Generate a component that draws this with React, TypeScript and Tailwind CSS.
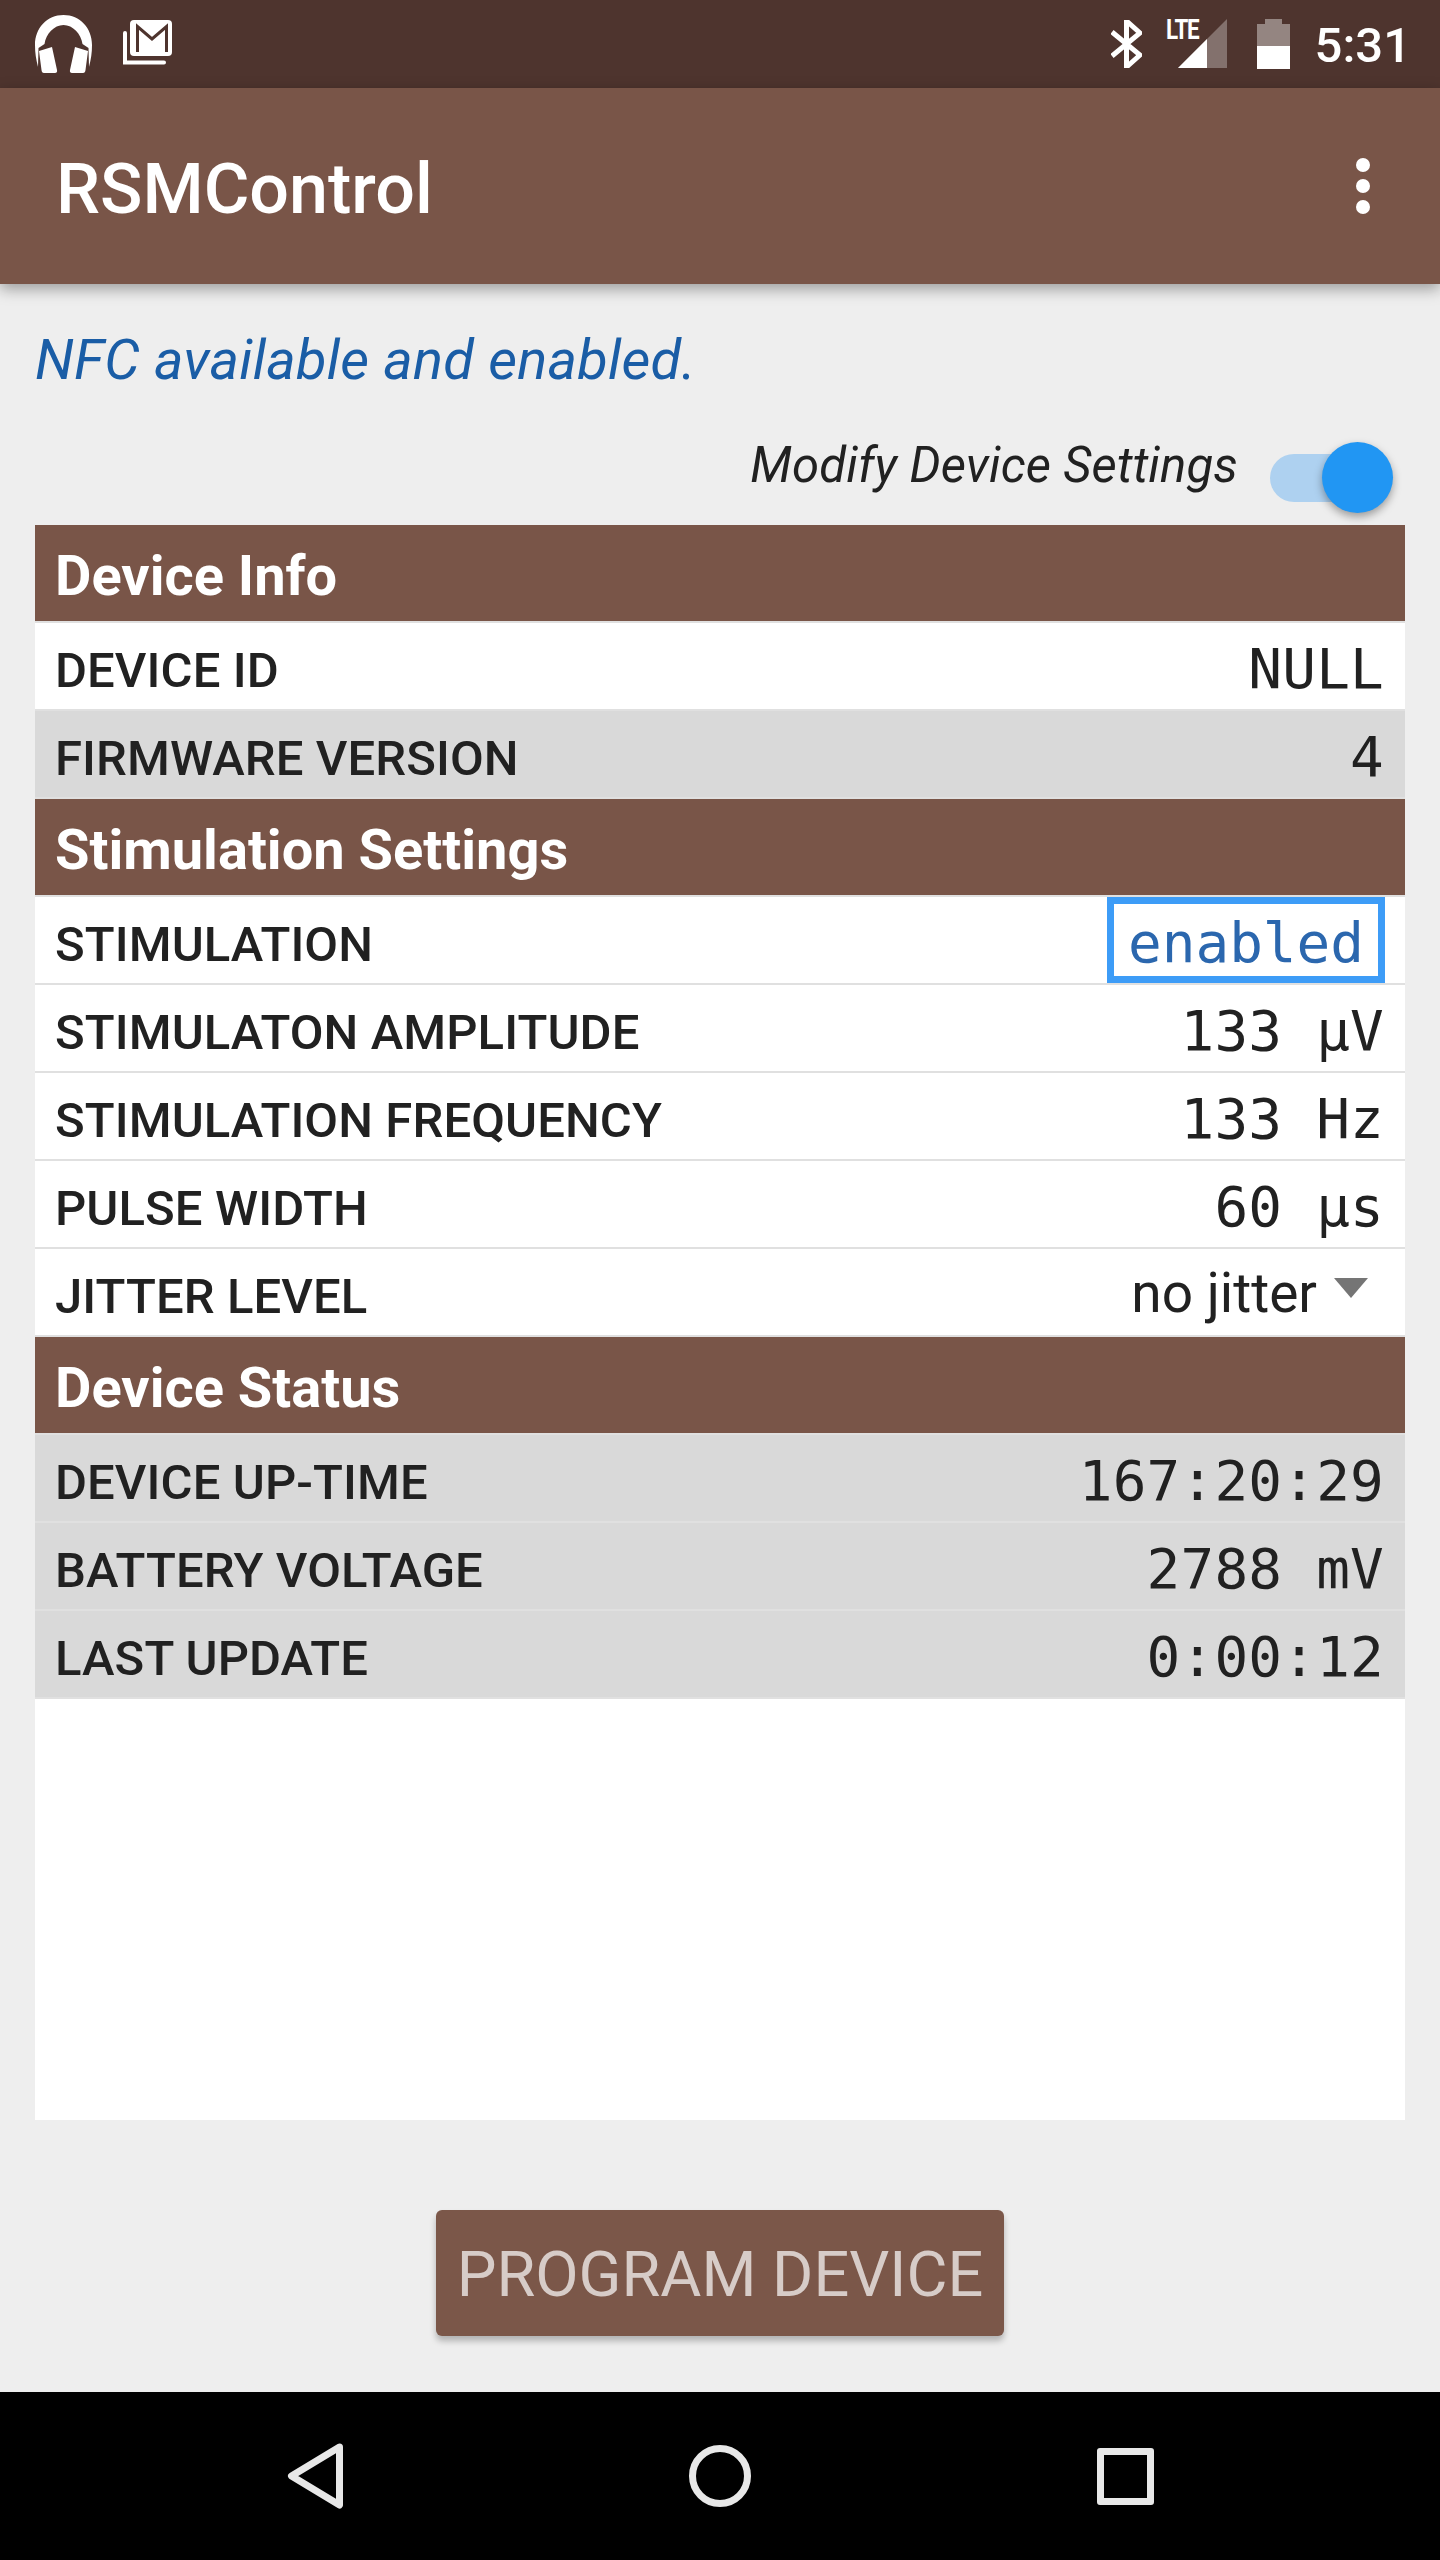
const headerClass = "flex h-[96px] mb-[2px] items-center bg-[#795548] px-[20px] pt-[5px] text-[56px] font-bold leading-none text-white";

function SectionHeader({ title }: { title: string }) {
  return <div className={headerClass}>{title}</div>;
}

function Row({ label, grey, children }: { label: string; grey?: boolean; children: React.ReactNode }) {
  return (
    <div className={`flex h-[86px] mb-[2px] items-center justify-between pl-[20px] pr-[20px] ${grey ? "bg-[#d9d9d9]" : "bg-white"}`}>
      <span className="mt-[9px] text-[49px] font-medium leading-none tracking-[0.1px] text-[#212121]">{label}</span>
      {children}
    </div>
  );
}

function Mono({ children }: { children: React.ReactNode }) {
  return <span className="mr-[1px] mt-[5px] font-['DejaVu_Sans_Mono',monospace] text-[56px] leading-none tracking-[0.2px] text-[#212121]">{children}</span>;
}

function StatusBar() {
  return (
    <div className="flex h-[88px] items-center justify-between bg-[#4e342e] pl-[35px] pr-[35px]">
      <div className="flex items-center gap-[30px]">
        <svg viewBox="0 0 57 58" className="h-[58px] w-[57px]" fill="#fff">
          <path d="M0 30C0 13 12 0 28.500 0S57 13 57 30c0 8-1 14-3 22l-.500-19-6-4C46 19 38 10 28.500 10S11 19 9.500 29l-6 4L3 52C1 44 0 38 0 30z" />
          <path d="M4 36l13-4 5 23c.5 2-.5 3-2 3H9c-1.500 0-2.300-1-2.500-3z" />
          <path d="M53 36l-13-4-5 23c-.5 2 .5 3 2 3h11c1.500 0 2.300-1 2.500-3z" />
        </svg>
        <svg viewBox="0 0 51 45" className="mt-[-3px] h-[45px] w-[51px]">
          <path d="M3 13v29.500h39" fill="none" stroke="#fff" strokeWidth="4" strokeLinecap="round" />
          <rect x="8" y="0" width="42" height="36" rx="4" fill="#fff" />
          <path d="M15.500 32V6.500L30 19 44.500 6.500V32" fill="none" stroke="#4e342e" strokeWidth="3" />
        </svg>
      </div>
      <div className="mr-[-6px] flex items-center">
        <svg viewBox="0 0 31 48" className="h-[48px] w-[31px]">
          <path d="M1 12l28 23-13.500 12V1L29 13 1 36" fill="none" stroke="#fff" strokeWidth="5" />
        </svg>
        <div className="relative ml-[36px] h-[50px] w-[49px]">
          <svg viewBox="0 0 49 49" className="absolute left-0 top-0 h-[49px] w-[49px]">
            <path d="M49 0v49H0z" fill="#fff" opacity="0.3" />
            <path d="M29 20v29H0z" fill="#fff" />
          </svg>
          <span className="absolute left-[-12px] top-[-3px] origin-left scale-x-[0.8] font-['Roboto',sans-serif] text-[28px] font-bold leading-[28px] tracking-[-1.500px] text-white">LTE</span>
        </div>
        <svg viewBox="0 0 33 50" className="ml-[30px] h-[50px] w-[33px]">
          <path d="M0 5h8V0h17v5h8v45H0z" fill="#fff" opacity="0.4" />
          <path d="M0 27h33v23H0z" fill="#fff" />
        </svg>
        <span className="ml-[25px] mt-[2px] text-[49px] font-medium leading-none text-white">5:31</span>
      </div>
    </div>
  );
}

function Toolbar() {
  return (
    <div className="relative z-10 flex h-[196px] items-center justify-between bg-[#795548] pl-[56px] pr-[70px] shadow-[0_5px_14px_rgba(0,0,0,0.35)]">
      <span className="mt-[6px] text-[70px] font-medium leading-none text-white">RSMControl</span>
      <div className="flex flex-col gap-[7px]">
        <div className="h-[14px] w-[14px] rounded-full bg-white" />
        <div className="h-[14px] w-[14px] rounded-full bg-white" />
        <div className="h-[14px] w-[14px] rounded-full bg-white" />
      </div>
    </div>
  );
}

function NavBar() {
  return (
    <div className="flex h-[168px] items-center bg-black pl-[287px] pr-[286px]">
      <div className="flex w-full items-center justify-between">
        <svg viewBox="0 0 56 66" className="h-[66px] w-[56px]">
          <path d="M52.500 4L4.500 33l48 29z" fill="none" stroke="#e8e8e8" strokeWidth="7" strokeLinejoin="round" />
        </svg>
        <div className="h-[62px] w-[62px] rounded-full border-[7px] border-[#e8e8e8]" />
        <div className="h-[57px] w-[57px] rounded-[3px] border-[7px] border-[#e8e8e8]" />
      </div>
    </div>
  );
}

export default function App() {
  return (
    <div className="flex h-[2560px] w-[1440px] flex-col overflow-hidden bg-[#eeeeee] font-['Roboto',sans-serif]">
      <StatusBar />
      <Toolbar />

      <div className="flex flex-1 flex-col px-[35px]">
        <div className="flex h-[146px] items-end pb-[42px]">
          <span className="text-[56px] italic leading-none tracking-[0.25px] text-[#1a5da6]">NFC available and enabled.</span>
        </div>

        <div className="flex h-[95px] items-start justify-end pr-[12px]">
          <span className="mt-[11px] text-[49px] italic leading-none tracking-[0.15px] text-[#212121]">Modify Device Settings</span>
          <div className="relative ml-[32px] mt-[12px] h-[71px] w-[123px]">
            <div className="absolute left-0 top-[12px] h-[48px] w-[98px] rounded-full bg-[#aed1f0]" />
            <div className="absolute right-0 top-0 h-[71px] w-[71px] rounded-full bg-[#2196f3] shadow-[0_4px_8px_rgba(0,0,0,0.35)]" />
          </div>
        </div>

        <div className="flex h-[1595px] flex-col bg-white">
          <div className="bg-[#e0e0e0]">
            <SectionHeader title="Device Info" />
            <Row label="DEVICE ID"><Mono>NULL</Mono></Row>
            <Row label="FIRMWARE VERSION" grey><Mono>4</Mono></Row>
            <SectionHeader title="Stimulation Settings" />
            <Row label="STIMULATION">
              <span className="box-border flex h-[86px] w-[278px] items-center justify-center border-[7px] border-[#3d9cf7] bg-white pt-[5px] font-['DejaVu_Sans_Mono',monospace] text-[56px] leading-none text-[#2b67ae]">enabled</span>
            </Row>
            <Row label="STIMULATON AMPLITUDE"><Mono>133 µV</Mono></Row>
            <Row label="STIMULATION FREQUENCY"><Mono>133 Hz</Mono></Row>
            <Row label="PULSE WIDTH"><Mono>60 µs</Mono></Row>
            <Row label="JITTER LEVEL">
              <div className="flex items-center pr-[17px]">
                <span className="mt-[2px] text-[55px] leading-none text-[#212121]">no jitter</span>
                <svg viewBox="0 0 34 20" className="mb-[8px] ml-[17px] h-[20px] w-[34px]">
                  <path d="M0 0h34L17 20z" fill="#757575" />
                </svg>
              </div>
            </Row>
            <SectionHeader title="Device Status" />
            <Row label="DEVICE UP-TIME" grey><Mono>167:20:29</Mono></Row>
            <Row label="BATTERY VOLTAGE" grey><Mono>2788 mV</Mono></Row>
            <Row label="LAST UPDATE" grey><Mono>0:00:12</Mono></Row>
          </div>
        </div>

        <div className="flex flex-1 items-start justify-center pt-[90px]">
          <button className="flex h-[126px] w-[568px] items-center justify-center rounded-[6px] bg-[#7b5749] pt-[3px] text-[63px] leading-none text-[#d7ccc8] shadow-[0_5px_6px_rgba(0,0,0,0.25)]">
            PROGRAM DEVICE
          </button>
        </div>
      </div>

      <NavBar />
    </div>
  );
}
